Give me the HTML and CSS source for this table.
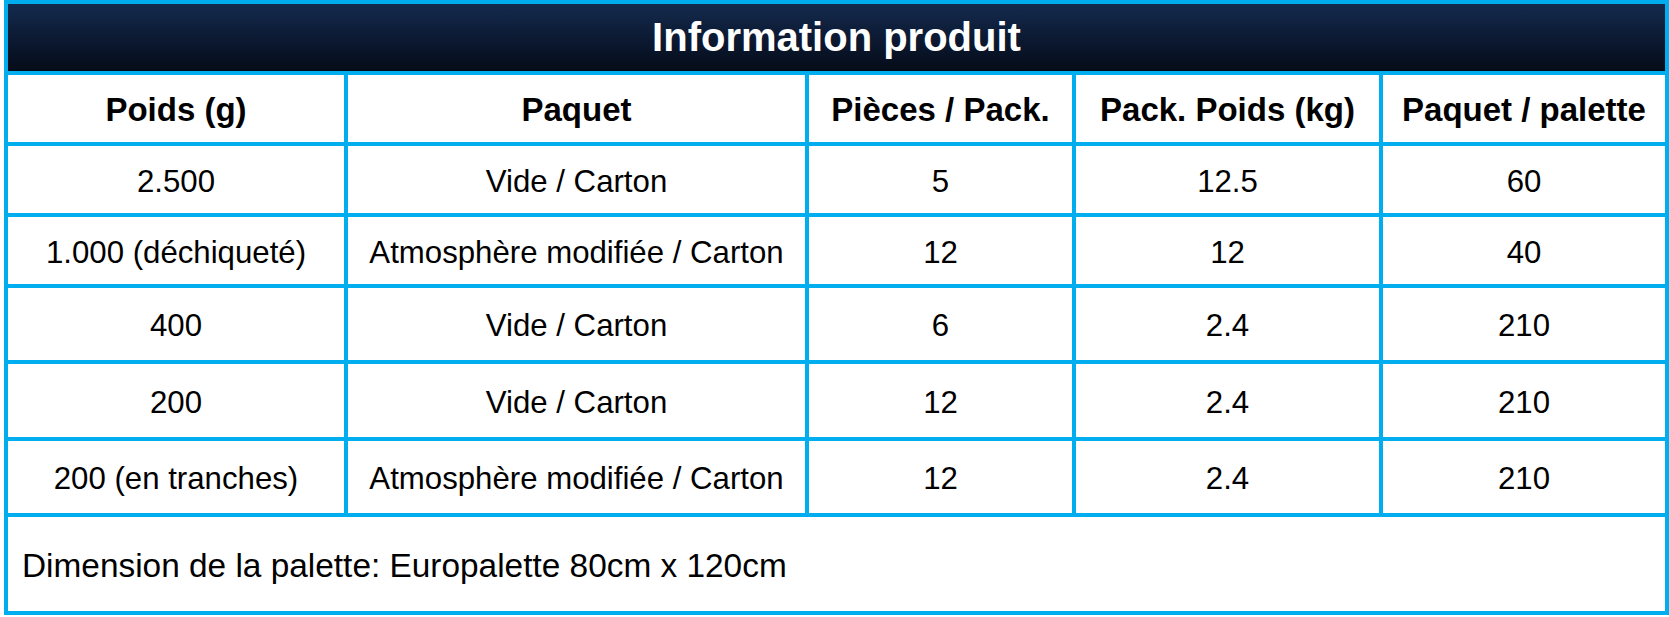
FILE: index.html
```html
<!DOCTYPE html>
<html lang="fr">
<head>
<meta charset="utf-8">
<title>Information produit</title>
<link rel="stylesheet" href="styles.css">
</head>
<body>
<div class="table" role="table">
  <div class="title" role="row">Information produit</div>
  <div class="cell head" role="columnheader">Poids (g)</div>
  <div class="cell head" role="columnheader">Paquet</div>
  <div class="cell head" role="columnheader">Pièces / Pack.</div>
  <div class="cell head" role="columnheader">Pack. Poids (kg)</div>
  <div class="cell head" role="columnheader">Paquet / palette</div>

  <div class="cell" role="cell">2.500</div>
  <div class="cell" role="cell">Vide / Carton</div>
  <div class="cell" role="cell">5</div>
  <div class="cell" role="cell">12.5</div>
  <div class="cell" role="cell">60</div>

  <div class="cell" role="cell">1.000 (déchiqueté)</div>
  <div class="cell" role="cell">Atmosphère modifiée / Carton</div>
  <div class="cell" role="cell">12</div>
  <div class="cell" role="cell">12</div>
  <div class="cell" role="cell">40</div>

  <div class="cell" role="cell">400</div>
  <div class="cell" role="cell">Vide / Carton</div>
  <div class="cell" role="cell">6</div>
  <div class="cell" role="cell">2.4</div>
  <div class="cell" role="cell">210</div>

  <div class="cell" role="cell">200</div>
  <div class="cell" role="cell">Vide / Carton</div>
  <div class="cell" role="cell">12</div>
  <div class="cell" role="cell">2.4</div>
  <div class="cell" role="cell">210</div>

  <div class="cell" role="cell">200 (en tranches)</div>
  <div class="cell" role="cell">Atmosphère modifiée / Carton</div>
  <div class="cell" role="cell">12</div>
  <div class="cell" role="cell">2.4</div>
  <div class="cell" role="cell">210</div>

  <div class="footer" role="row">Dimension de la palette: Europalette 80cm x 120cm</div>
</div>
</body>
</html>
```
FILE: styles.css
```css
html, body {
  margin: 0;
  padding: 0;
  background: #ffffff;
}

body {
  font-family: "Liberation Sans", Arial, sans-serif;
  color: #000000;
}

.table {
  margin-left: 4px;
  width: 1665px;
  box-sizing: border-box;
  display: grid;
  grid-template-columns: 340px 461px 267px 307px 286px;
  grid-template-rows: 71px 71px 71px 71px 76px 77px 76px 98px;
  border-left: 4px solid #00aeef;
  border-top: 4px solid #00aeef;
}

.title {
  grid-column: 1 / -1;
  display: flex;
  align-items: center;
  justify-content: center;
  background: linear-gradient(to bottom, #142b4e 0%, #0c1a33 50%, #050c18 100%);
  color: #ffffff;
  font-weight: bold;
  font-size: 40px;
  border-right: 4px solid #00aeef;
  border-bottom: 4px solid #00aeef;
}

.cell {
  display: flex;
  align-items: center;
  justify-content: center;
  text-align: center;
  font-size: 31.2px;
  padding-top: 4px;
  border-right: 4px solid #00aeef;
  border-bottom: 4px solid #00aeef;
  white-space: nowrap;
}

.head {
  font-weight: bold;
  font-size: 33px;
  padding-top: 2px;
}

.footer {
  grid-column: 1 / -1;
  display: flex;
  align-items: center;
  padding-left: 14px;
  padding-top: 4px;
  font-size: 33.4px;
  border-right: 4px solid #00aeef;
  border-bottom: 4px solid #00aeef;
}
```
